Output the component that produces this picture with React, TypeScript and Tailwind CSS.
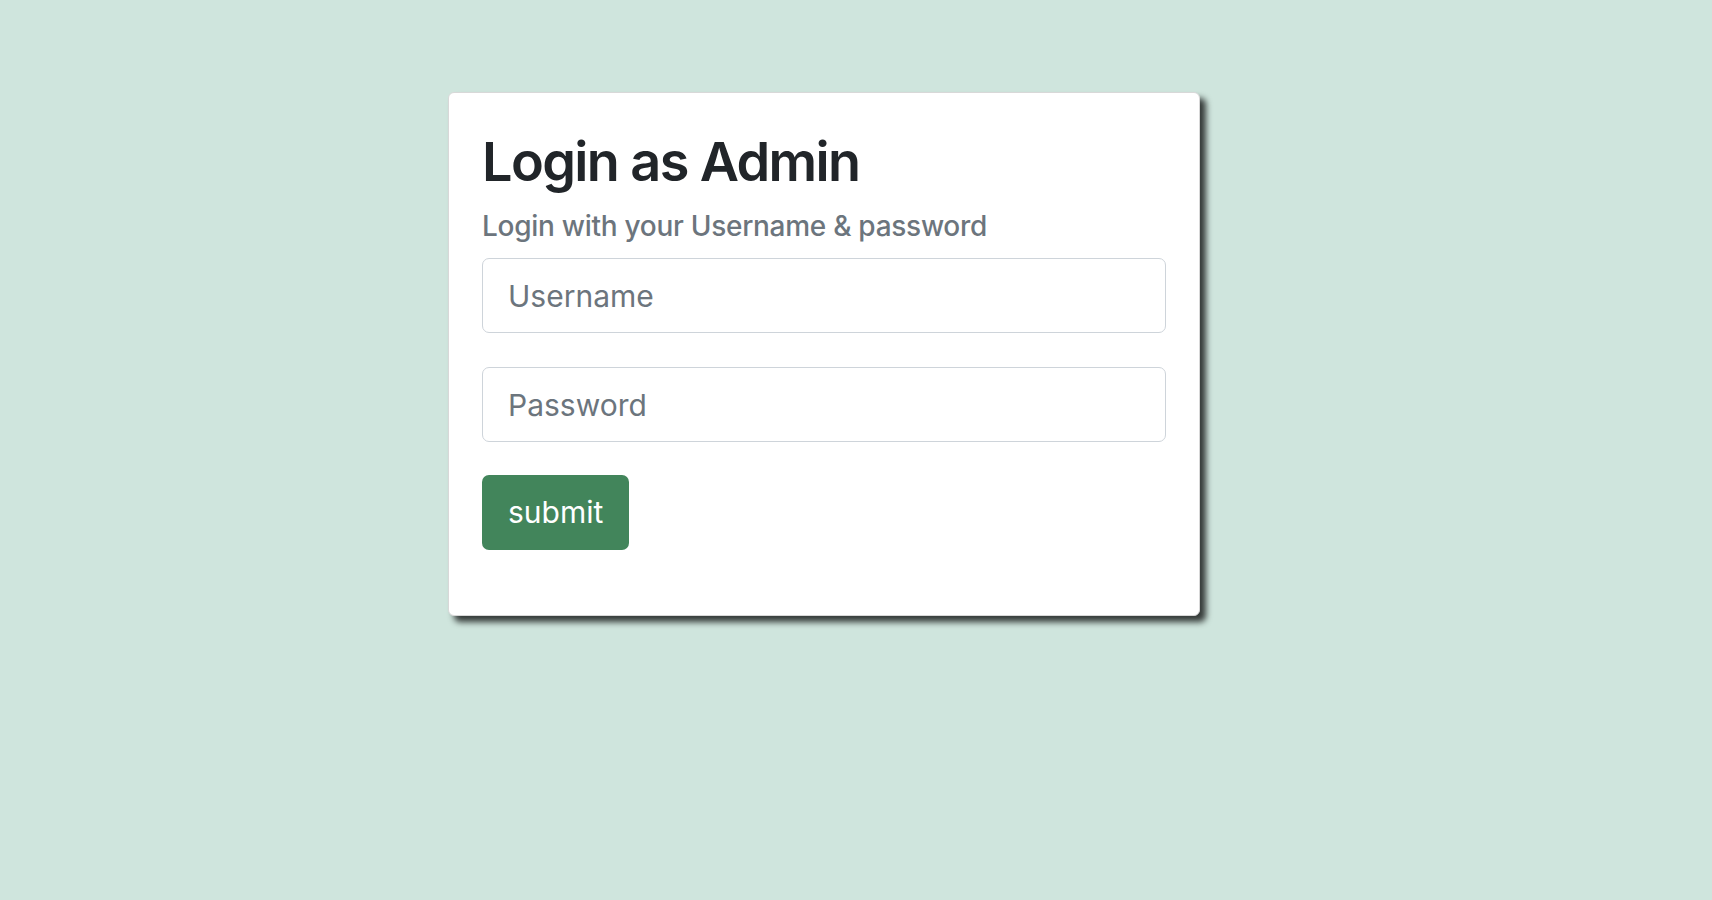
import React from "react";

const AdminLogin = () => {
  return (
    <div className="min-h-screen w-full bg-[#cfe5dd] font-['Inter','Noto_Sans',sans-serif]">
      <div className="pl-[448px] pt-[92px]">
        <div className="w-[752px] rounded-[6px] border border-[#d8d8d8] bg-white px-[33px] pt-[34px] pb-[65px] shadow-[6px_6px_6px_rgba(0,0,0,0.75)]">
          <h1 className="mb-[13px] text-[54px] leading-[1.29] font-semibold tracking-[-0.03em] text-[#212529]">
            Login as Admin
          </h1>
          <h6 className="mb-[15px] text-[28px] leading-[1.2] font-medium tracking-[-0.01em] text-[#6c757d]">
            Login with your Username &amp; password
          </h6>
          <form className="flex flex-col" onSubmit={(e) => e.preventDefault()}>
            <input
              type="text"
              placeholder="Username"
              className="mb-[34px] h-[75px] w-full rounded-[7px] border border-[#ced4da] bg-white px-[25px] text-[30px] text-[#212529] outline-none placeholder:text-[#6c757d]"
            />
            <input
              type="password"
              placeholder="Password"
              className="mb-[33px] h-[75px] w-full rounded-[7px] border border-[#ced4da] bg-white px-[25px] text-[30px] text-[#212529] outline-none placeholder:text-[#6c757d]"
            />
            <div>
              <button
                type="submit"
                className="h-[75px] rounded-[7px] bg-[#42855b] px-[26px] text-[30px] text-white"
              >
                submit
              </button>
            </div>
          </form>
        </div>
      </div>
    </div>
  );
};

export default AdminLogin;
